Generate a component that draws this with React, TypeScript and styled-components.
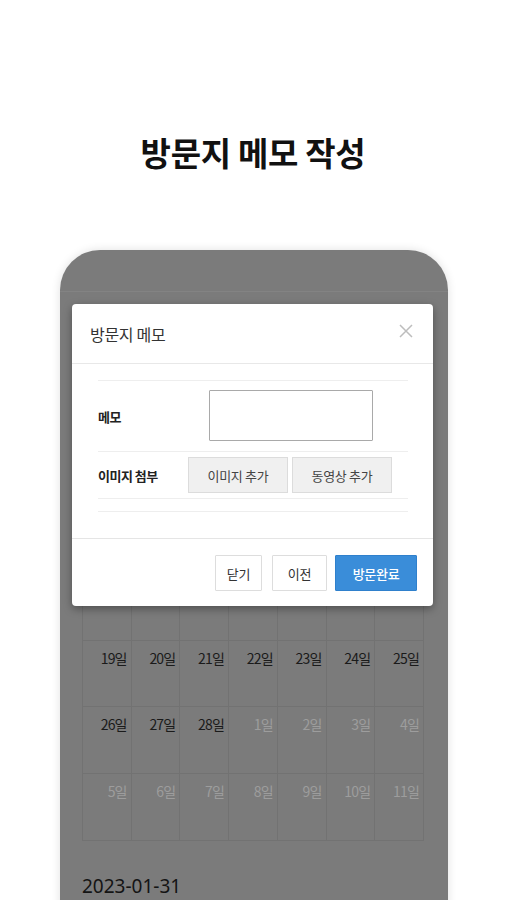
import React from "react";
import styled, { createGlobalStyle } from "styled-components";

const Global = createGlobalStyle`
  html, body { margin: 0; padding: 0; background: #fff; overflow: hidden; }
  body { font-family: "Noto Sans CJK KR", "Noto Sans", sans-serif; }
  * { box-sizing: border-box; }
`;

const Page = styled.div`
  width: 506px;
  height: 900px;
  overflow: hidden;
  display: flex;
  flex-direction: column;
  align-items: center;
`;

const Title = styled.h1`
  margin: 128px 0 0;
  font-size: 33px;
  line-height: 48px;
  font-weight: 700;
  color: #111;
  letter-spacing: -0.3px;
`;

const Phone = styled.div`
  position: relative;
  margin-top: 74px;
  margin-left: 2px;
  width: 388px;
  height: 700px;
  flex-shrink: 0;
  background: #7b7b7b;
  border-radius: 40px 40px 0 0;
  box-shadow: 0 0 10px rgba(0, 0, 0, 0.12);
  display: flex;
  flex-direction: column;
`;

const PhoneHeader = styled.div`
  height: 42px;
  border-bottom: 1px solid #838383;
  flex-shrink: 0;
`;

const CalendarArea = styled.div`
  padding: 0 24px 0 22px;
  display: flex;
  flex-direction: column;
`;

const MonthBar = styled.div`
  height: 148px;
  display: flex;
  align-items: center;
  justify-content: center;
  font-size: 18px;
  color: #1c1c1c;
`;

const Grid = styled.div`
  display: grid;
  grid-template-columns: repeat(7, 1fr);
  grid-auto-rows: 66.6px;
  border-left: 1px solid #727272;
  border-top: 1px solid #727272;
`;

const Cell = styled.div<{ $faded?: boolean }>`
  border-right: 1px solid #727272;
  border-bottom: 1px solid #727272;
  padding: 7px 4px 0 0;
  text-align: right;
  font-size: 14px;
  line-height: 20px;
  letter-spacing: -0.8px;
  color: ${(p) => (p.$faded ? "#9d9d9d" : "#1a1a1a")};
`;

const DateLabel = styled.div`
  margin-top: 32px;
  font-family: "Noto Sans", "Noto Sans CJK KR", sans-serif;
  font-size: 19px;
  line-height: 26px;
  color: #141414;
`;

const Dialog = styled.div`
  position: absolute;
  left: 12px;
  top: 54px;
  width: 361px;
  background: #fff;
  border-radius: 4px;
  box-shadow: 0 3px 9px rgba(0, 0, 0, 0.35);
  display: flex;
  flex-direction: column;
`;

const DialogHeader = styled.div`
  height: 60px;
  display: flex;
  align-items: center;
  justify-content: space-between;
  padding: 0 19px 0 18px;
  border-bottom: 1px solid #e8e8e8;
`;

const DialogTitle = styled.h2`
  margin: 0;
  font-size: 16px;
  font-weight: 400;
  color: #333;
  letter-spacing: -0.3px;
`;

const Close = styled.button`
  border: 0;
  background: none;
  padding: 0;
  width: 16px;
  height: 16px;
  margin-top: -6px;
  display: flex;
  align-items: center;
  justify-content: center;
`;

const DialogBody = styled.div`
  padding: 16px 25px 26px 26px;
`;

const FormTable = styled.div`
  display: flex;
  flex-direction: column;
  border-top: 1px solid #eeeeee;
  border-bottom: 1px solid #eeeeee;
`;

const FormRow = styled.div<{ $h: number }>`
  height: ${(p) => p.$h}px;
  display: grid;
  grid-template-columns: 90px 1fr;
  align-items: center;
  & + & {
    border-top: 1px solid #eeeeee;
  }
`;

const Label = styled.div`
  font-size: 13px;
  font-weight: 700;
  color: #222;
  letter-spacing: -0.5px;
`;

const MemoInput = styled.textarea`
  margin-left: 21px;
  margin-top: -2px;
  width: 164px;
  height: 51px;
  border: 1px solid #a9a9a9;
  border-radius: 1px;
  resize: none;
  outline: none;
  display: block;
`;

const AttachRow = styled.div`
  display: flex;
  gap: 4px;
`;

const AttachButton = styled.button`
  width: 100px;
  height: 36px;
  background: #f0f0f0;
  border: 1px solid #dcdcdc;
  font-family: "Noto Sans CJK KR", sans-serif;
  font-size: 13px;
  color: #444;
  letter-spacing: -0.3px;
  padding: 0;
`;

const ExtraLine = styled.div`
  height: 13px;
  border-bottom: 1px solid #eeeeee;
`;

const DialogFooter = styled.div`
  border-top: 1px solid #e5e5e5;
  padding: 16px 16px 15px;
  display: flex;
  justify-content: flex-end;
  align-items: center;
`;

const FooterButton = styled.button<{ $w: number; $primary?: boolean; $gap: number }>`
  width: ${(p) => p.$w}px;
  height: 36px;
  margin-left: ${(p) => p.$gap}px;
  padding: 0;
  font-family: "Noto Sans CJK KR", sans-serif;
  font-size: 13px;
  font-weight: ${(p) => (p.$primary ? 500 : 400)};
  letter-spacing: -0.3px;
  border-radius: 1px;
  border: 1px solid ${(p) => (p.$primary ? "#2f80cc" : "#dddddd")};
  background: ${(p) => (p.$primary ? "#3a8dd9" : "#fff")};
  color: ${(p) => (p.$primary ? "#fff" : "#333")};
`;

type Day = { d: number; f?: boolean };

const weeks: Day[][] = [
  [29, 30, 31, 1, 2, 3, 4].map((d, i) => ({ d, f: i < 3 })),
  [5, 6, 7, 8, 9, 10, 11].map((d) => ({ d })),
  [12, 13, 14, 15, 16, 17, 18].map((d) => ({ d })),
  [19, 20, 21, 22, 23, 24, 25].map((d) => ({ d })),
  [26, 27, 28, 1, 2, 3, 4].map((d, i) => ({ d, f: i > 2 })),
  [5, 6, 7, 8, 9, 10, 11].map((d) => ({ d, f: true })),
];

export default function App() {
  return (
    <Page>
      <Global />
      <Title>방문지 메모 작성</Title>
      <Phone>
        <PhoneHeader />
        <CalendarArea>
          <MonthBar>2023.02</MonthBar>
          <Grid>
            {weeks.flat().map((day, i) => (
              <Cell key={i} $faded={day.f}>
                {day.d}일
              </Cell>
            ))}
          </Grid>
          <DateLabel>2023-01-31</DateLabel>
        </CalendarArea>
        <Dialog>
          <DialogHeader>
            <DialogTitle>방문지 메모</DialogTitle>
            <Close aria-label="닫기">
              <svg width="14" height="14" viewBox="0 0 14 14">
                <path d="M1 1L13 13M13 1L1 13" stroke="#bdbdbd" strokeWidth="1.5" fill="none" />
              </svg>
            </Close>
          </DialogHeader>
          <DialogBody>
            <FormTable>
              <FormRow $h={70}>
                <Label>메모</Label>
                <MemoInput />
              </FormRow>
              <FormRow $h={47}>
                <Label>이미지 첨부</Label>
                <AttachRow>
                  <AttachButton>이미지 추가</AttachButton>
                  <AttachButton>동영상 추가</AttachButton>
                </AttachRow>
              </FormRow>
            </FormTable>
            <ExtraLine />
          </DialogBody>
          <DialogFooter>
            <FooterButton $w={47} $gap={0}>닫기</FooterButton>
            <FooterButton $w={55} $gap={10}>이전</FooterButton>
            <FooterButton $w={82} $gap={8} $primary>방문완료</FooterButton>
          </DialogFooter>
        </Dialog>
      </Phone>
    </Page>
  );
}
